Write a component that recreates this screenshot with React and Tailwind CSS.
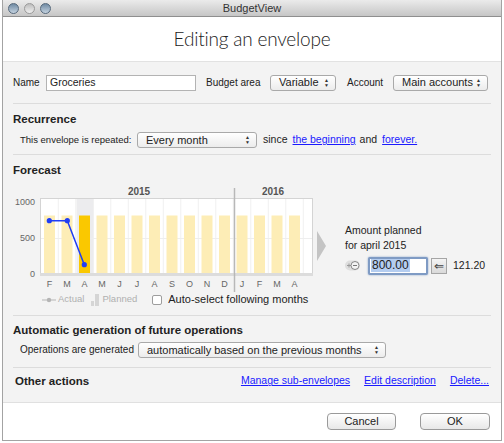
import React from 'react';

const MONTHS = ['F', 'M', 'A', 'M', 'J', 'J', 'A', 'S', 'O', 'N', 'D', 'J', 'F', 'M', 'A'];
const UI = { fontFamily: '"Liberation Sans", Arial, sans-serif' };

function Select({ label, className }) {
  return (
    <div className={`flex items-center justify-between h-[16px] pl-[8px] pr-[6px] bg-gradient-to-b from-white to-[#ececec] border border-[#a9a9a9] rounded-[3px] text-[11px] text-[#222] ${className}`}>
      <span>{label}</span>
      <span className="text-[5px] leading-[5px] text-[#333] flex flex-col items-center">
        <span>▲</span>
        <span>▼</span>
      </span>
    </div>
  );
}

function Chart() {
  const bx = (i) => 44 + i * 17.5;
  return (
    <svg width="310" height="108" viewBox="12 182 310 108" className="block ml-[9px] mt-[4px]">
      <text x="139" y="193" textAnchor="middle" fontSize="10" fontWeight="bold" fill="#555" style={UI}>2015</text>
      <text x="273" y="193" textAnchor="middle" fontSize="10" fontWeight="bold" fill="#555" style={UI}>2016</text>
      <rect x="40.5" y="196.5" width="272" height="75" fill="#fff" stroke="#d4d4d4" />
      <rect x="76.5" y="197" width="17" height="75" fill="#ececee" />
      {MONTHS.map((_, i) => (
        <line key={'g' + i} x1={bx(i) + 14.3} x2={bx(i) + 14.3} y1="197" y2="271" stroke="#f0f0f0" />
      ))}
      <line x1="41" x2="312" y1="236.5" y2="236.5" stroke="#eeeeee" />
      {MONTHS.map((_, i) => (
        <rect key={'b' + i} x={bx(i)} y="213.5" width="11" height="58" fill={i === 2 ? '#fac800' : '#fdedb6'} />
      ))}
      <rect x="40" y="271" width="273" height="3" fill="#dcdcdc" />
      <line x1="234.5" x2="234.5" y1="186" y2="290" stroke="#b8b8b8" strokeWidth="1.5" />
      <polyline points="49.3,218.7 67.3,218.7 84.3,262.7" fill="none" stroke="#1f3df5" strokeWidth="1.5" />
      {[[49.3, 218.7], [67.3, 218.7], [84.3, 262.7]].map(([x, y], i) => (
        <circle key={i} cx={x} cy={y} r="2.6" fill="#1f3df5" />
      ))}
      <text x="35" y="203" textAnchor="end" fontSize="9" fill="#666" style={UI}>1000</text>
      <text x="35" y="239" textAnchor="end" fontSize="9" fill="#666" style={UI}>500</text>
      <text x="35" y="275" textAnchor="end" fontSize="9" fill="#666" style={UI}>0</text>
      {MONTHS.map((m, i) => (
        <text key={'m' + i} x={bx(i) + 5.5} y="285" textAnchor="middle" fontSize="9" fill="#666" style={UI}>{m}</text>
      ))}
    </svg>
  );
}

function Sep() {
  return <div className="h-px bg-[#dcdcdc] mx-[10px]" />;
}

export default function App() {
  return (
    <div className="w-[504px] h-[443px] bg-white pl-[2px] pr-[2px]" style={UI}>
      <div className="h-[441px] border-x border-b border-[#a3a3a3] flex flex-col bg-white">
        {/* title bar */}
        <div className="h-[17px] shrink-0 flex items-center relative bg-gradient-to-b from-[#ebebeb] to-[#c6c6c6] border-b border-[#8f8f8f]">
          <div className="flex gap-[5px] pl-[5px]">
            <span className="w-[11px] h-[11px] rounded-full bg-gradient-to-b from-[#6f8aa3] to-[#c5d3e0] border border-[#56697c]" />
            <span className="w-[11px] h-[11px] rounded-full bg-gradient-to-b from-[#bdbdbd] to-[#f0f0f0] border border-[#9a9a9a]" />
            <span className="w-[11px] h-[11px] rounded-full bg-gradient-to-b from-[#6f8aa3] to-[#c5d3e0] border border-[#56697c]" />
          </div>
          <div className="absolute inset-0 flex items-center justify-center text-[11px] text-[#333]">BudgetView</div>
        </div>

        {/* header */}
        <div className="h-[45px] shrink-0 flex items-center justify-center border-b border-[#e2e2e2]">
          <span className="text-[19px] tracking-[-0.2px] text-[#222] font-light" style={{ fontFamily: 'Lato, sans-serif' }}>Editing an envelope</span>
        </div>

        {/* body */}
        <div className="flex-1 bg-[#f3f3f3] flex flex-col text-[10.5px] text-[#222] whitespace-nowrap">
          <div className="flex items-center h-[41px] pl-[10px]">
            <span className="w-[33px] text-[10px]">Name</span>
            <div className="w-[150px] h-[16px] bg-white border border-[#b3b3b3] pl-[3px] flex items-center">Groceries</div>
            <span className="w-[74px] pl-[10px] text-[10px]">Budget area</span>
            <Select label="Variable" className="w-[66px]" />
            <span className="w-[57px] pl-[11px] text-[10px]">Account</span>
            <Select label="Main accounts" className="w-[95px]" />
          </div>
          <Sep />
          <div className="pl-[10px] pt-[7px] text-[11.5px] font-bold">Recurrence</div>
          <div className="flex items-center pl-[17px] pt-[3px] h-[21px]">
            <span className="w-[117px] text-[9.5px]">This envelope is repeated:</span>
            <Select label="Every month" className="w-[120px]" />
            <span className="ml-[6px]">since</span>
            <span className="ml-[5px] text-[#1a1aff] underline">the beginning</span>
            <span className="ml-[4px]">and</span>
            <span className="ml-[5px] text-[#1a1aff] underline">forever.</span>
          </div>
          <div className="pt-[5px]"><Sep /></div>

          <div className="pl-[10px] pt-[7px] text-[11.5px] font-bold">Forecast</div>
          <div className="flex">
            <div className="flex flex-col">
              <Chart />
              <div className="flex items-center h-[16px] pl-[39px] text-[9.5px] text-[#b0b0b0]">
                <svg width="14" height="6" className="mr-[2px]">
                  <line x1="0" x2="14" y1="3" y2="3" stroke="#b5b5b5" />
                  <circle cx="7" cy="3" r="2.2" fill="#b5b5b5" />
                </svg>
                <span>Actual</span>
                <svg width="9" height="12" className="ml-[7px] mr-[2px]">
                  <rect x="0" y="7" width="3" height="5" fill="#d5d5d5" />
                  <rect x="4" y="0" width="4" height="12" fill="#d5d5d5" />
                </svg>
                <span>Planned</span>
                <span className="ml-[15px] w-[10px] h-[10px] bg-white border border-[#9d9d9d] rounded-[2px]" />
                <span className="ml-[6px] text-[11px] text-[#222]">Auto-select following months</span>
              </div>
            </div>
            <div className="pt-[51px]">
              <svg width="10" height="30" className="ml-[-5px]">
                <polygon points="0,0 9,15 0,30" fill="#c4c4c4" />
              </svg>
            </div>
            <div className="pl-[18px] pt-[42px] flex flex-col">
              <span className="leading-[16px]">Amount planned</span>
              <span className="leading-[15px]">for april 2015</span>
              <div className="flex items-center mt-[4px]">
                <svg width="15" height="11" className="shrink-0">
                  <rect x="0" y="0.5" width="15" height="10" rx="5" fill="#dedede" />
                  <path d="M2 5.5h4M4 3.5v4" stroke="#999" strokeWidth="1" />
                  <circle cx="10" cy="5.5" r="4" fill="#f3f3f3" stroke="#888" />
                  <path d="M8 5.5h4" stroke="#777" strokeWidth="1" />
                </svg>
                <div className="ml-[8px] w-[60px] h-[18px] border-2 border-[#7f9bc4] rounded-[2px] bg-white flex items-center pl-[1px] shadow-[0_0_2px_#7f9bc4]">
                  <span className="bg-[#b4cdf0] text-[12px] leading-[13px] px-[1px]">800.00</span>
                </div>
                <div className="ml-[3px] w-[16px] h-[16px] border border-[#a5a5a5] bg-gradient-to-b from-[#f4f4f4] to-[#d9d9d9] flex items-center justify-center text-[12px] text-[#444]">⇐</div>
                <span className="ml-[6px]">121.20</span>
              </div>
            </div>
          </div>
          <div className="pt-[7px]"><Sep /></div>

          <div className="pl-[10px] pt-[6px] text-[11.5px] font-bold">Automatic generation of future operations</div>
          <div className="flex items-center pl-[17px] pt-[2px] h-[20px]">
            <span className="w-[118px] text-[10px]">Operations are generated</span>
            <Select label="automatically based on the previous months" className="w-[248px]" />
          </div>
          <div className="pt-[8px]"><Sep /></div>
          <div className="flex items-center h-[27px] pl-[12px] pr-[12px]">
            <span className="text-[11.5px] font-bold">Other actions</span>
            <span className="ml-auto text-[#1a1aff] underline">Manage sub-envelopes</span>
            <span className="ml-[14px] text-[#1a1aff] underline">Edit description</span>
            <span className="ml-[14px] text-[#1a1aff] underline">Delete...</span>
          </div>
        </div>

        {/* footer */}
        <div className="h-[38px] shrink-0 border-t border-[#e0e0e0] flex items-center justify-end gap-[24px] pr-[11px] text-[11px] text-[#222]">
          <div className="w-[69px] h-[17px] rounded-[4px] border border-[#9a9a9a] bg-gradient-to-b from-white to-[#e8e8e8] flex items-center justify-center">Cancel</div>
          <div className="w-[70px] h-[17px] rounded-[4px] border border-[#9a9a9a] bg-gradient-to-b from-white to-[#e8e8e8] flex items-center justify-center">OK</div>
        </div>
      </div>
    </div>
  );
}
